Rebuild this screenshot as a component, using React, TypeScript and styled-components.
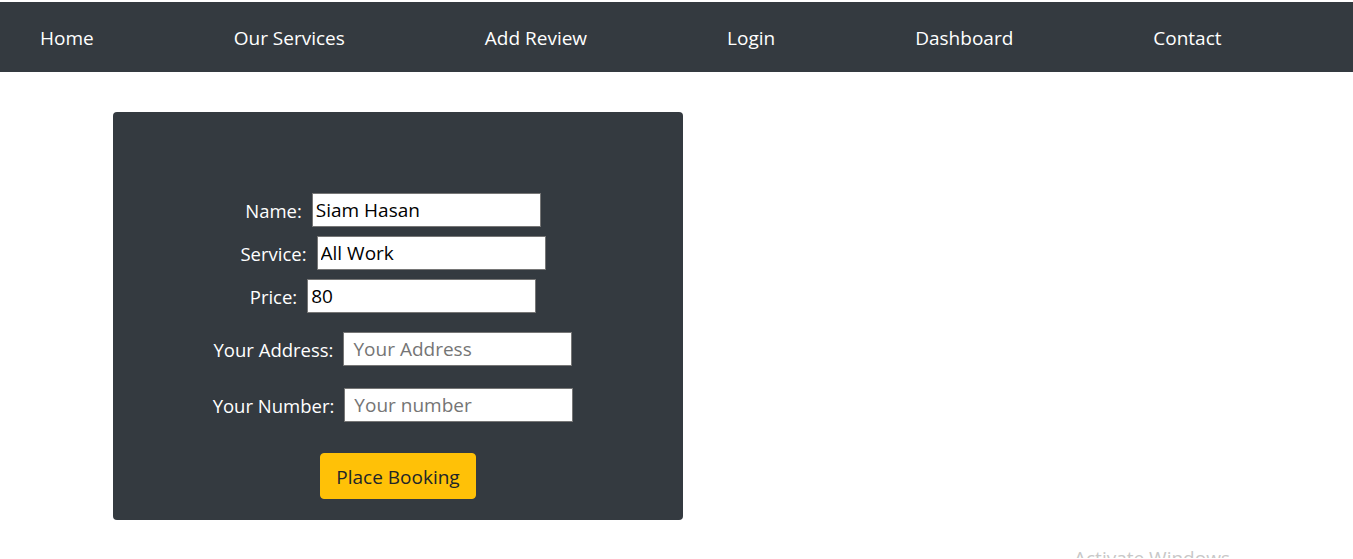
import React from "react";
import styled, { createGlobalStyle } from "styled-components";

const Global = createGlobalStyle`
  html, body { margin: 0; padding: 0; background: #fff; }
  body { font-family: "Open Sans", "Noto Sans", sans-serif; }
  * { box-sizing: border-box; }
`;

const Page = styled.div`
  padding-top: 2px;
  border-top: 1px solid #e2e2e2;
  margin-top: -1px;
  min-height: 559px;
  position: relative;
  overflow: hidden;
`;

const Nav = styled.nav`
  height: 70px;
  background: #343a40;
  display: flex;
  align-items: center;
  gap: 140px;
  padding-left: 40px;
  padding-top: 2px;
`;

const NavLink = styled.a`
  color: #fff;
  font-size: 19px;
  text-decoration: none;
  line-height: 1;
`;

const Card = styled.div`
  margin: 40px 0 0 113px;
  width: 570px;
  height: 408px;
  background: #343a40;
  border-radius: 4px;
  padding-top: 81px;
  display: flex;
  flex-direction: column;
  align-items: center;
`;

const Row = styled.div<{ $mt: number }>`
  display: flex;
  align-items: center;
  gap: 10px;
  padding-right: 10px;
  margin-top: ${(p) => p.$mt}px;
`;

const Label = styled.label`
  color: #fff;
  font-size: 18.5px;
`;

const Input = styled.input`
  width: 229px;
  height: 34px;
  border: 1px solid #767676;
  background: #fff;
  color: #000;
  font-family: "Open Sans", "Noto Sans", sans-serif;
  font-size: 19px;
  padding: 0 3px;
  outline: none;
  border-radius: 0;
  &::placeholder { color: #757575; }
`;

const PlaceholderInput = styled(Input)`
  padding: 0 9px;
`;

const Button = styled.button`
  margin-top: 31px;
  width: 156px;
  height: 46px;
  padding-top: 2px;
  background: #ffc107;
  border: 1px solid #ffc107;
  border-radius: 4px;
  color: #212529;
  font-family: "Open Sans", "Noto Sans", sans-serif;
  font-size: 19px;
  cursor: pointer;
`;

const Watermark = styled.div`
  position: absolute;
  left: 1074px;
  top: 545px;
  color: #c8c8c8;
  font-size: 19px;
  font-family: "Open Sans", sans-serif;
`;

export default function App() {
  const links = ["Home", "Our Services", "Add Review", "Login", "Dashboard", "Contact"];
  return (
    <Page>
      <Global />
      <Nav>
        {links.map((l) => (
          <NavLink key={l} href="#">{l}</NavLink>
        ))}
      </Nav>
      <Card>
        <Row $mt={0}>
          <Label>Name:</Label>
          <Input defaultValue="Siam Hasan" />
        </Row>
        <Row $mt={9}>
          <Label>Service:</Label>
          <Input defaultValue="All Work" />
        </Row>
        <Row $mt={9}>
          <Label>Price:</Label>
          <Input defaultValue="80" />
        </Row>
        <Row $mt={19}>
          <Label>Your Address:</Label>
          <PlaceholderInput placeholder="Your Address" />
        </Row>
        <Row $mt={22}>
          <Label>Your Number:</Label>
          <PlaceholderInput placeholder="Your number" />
        </Row>
        <Button>Place Booking</Button>
      </Card>
      <Watermark>Activate Windows</Watermark>
    </Page>
  );
}
